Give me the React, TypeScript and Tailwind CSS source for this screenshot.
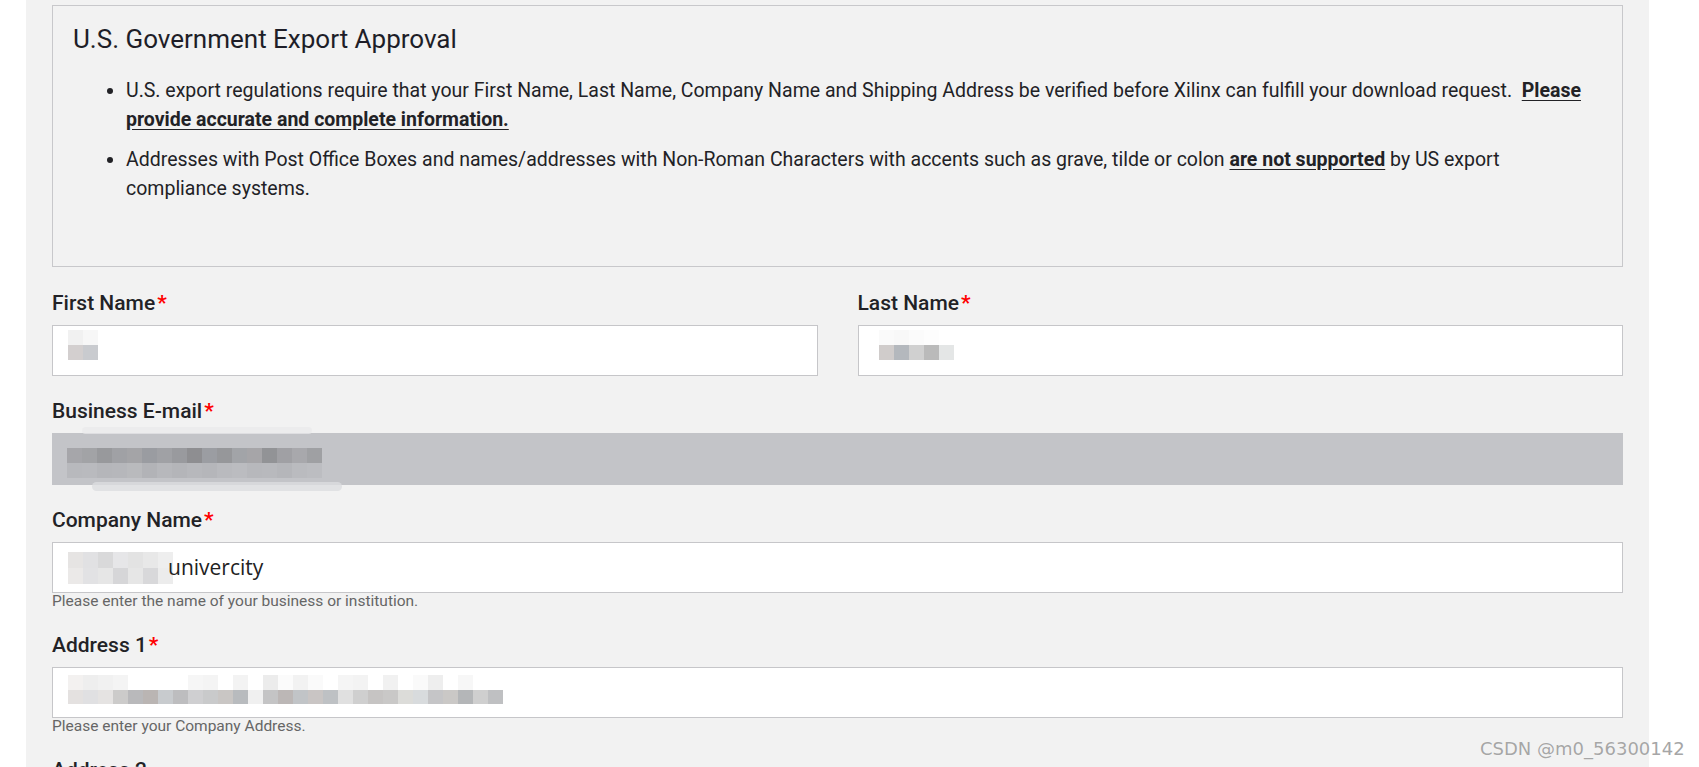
import React from "react";

type Rows = string[][];

function Mosaic({ rows, h = 15 }: { rows: Rows; h?: number }) {
  return (
    <div className="flex flex-col">
      {rows.map((r, i) => (
        <div key={i} className="flex">
          {r.map((c, j) => (
            <div key={j} className="w-[15px] shrink-0" style={{ backgroundColor: c, height: h }} />
          ))}
        </div>
      ))}
    </div>
  );
}

function Label({ children }: { children: React.ReactNode }) {
  return (
    <div className="text-[21px] leading-[24px] font-medium text-[#222226] mb-[10px]">
      {children}
      <span className="text-[#ff0000] font-bold ml-[2px]">*</span>
    </div>
  );
}

const inputBase = "h-[51px] border border-[#c6c6c9] bg-white";

const emailTop = ["#a6a6aa", "#a2a3a6", "#98999c", "#a0a1a5", "#a4a4a7", "#9a9ca1", "#a0a1a5", "#999a9e", "#8e8e91", "#9b9da2", "#96979a", "#a2a4a8", "#a6a5a8", "#929396", "#a0a0a4", "#a8a8ac", "#9fa0a3"];
const emailBot = ["#b8b9bd", "#b9babe", "#b5b6ba", "#b6b7bb", "#b9babd", "#b2b3b7", "#b7b8bc", "#b4b5b9", "#b7b8bc", "#b5b6ba", "#b9babe", "#bbbcc0", "#b7b8bc", "#b8b9bd", "#b5b6ba", "#babbbf", "#bcbdc1"];

const addrTop = ["#f3f1f0", "#eeeeee", "#f1f1f1", "#f4f4f4", "#ffffff", "#ffffff", "#ffffff", "#ffffff", "#f6f6f6", "#f4f4f4", "#ffffff", "#f3f3f3", "#ffffff", "#ececec", "#fbfbfb", "#f2f2f2", "#fafafa", "#ffffff", "#f5f5f5", "#f3f3f3", "#ffffff", "#f1f1f1", "#ffffff", "#fafafa", "#eeeeee", "#ffffff", "#f7f7f7", "#ffffff", "#ffffff"];
const addrBot = ["#e4e1e0", "#e0e0e2", "#e5e3e2", "#cccbca", "#b9b9bb", "#bab5b3", "#c8cbce", "#bdbdbf", "#cfcfd1", "#c9cacb", "#c9c6c4", "#b8bbbe", "#f0f0f0", "#c4c4c5", "#bcb7b6", "#c1c4c7", "#c9c5c4", "#bec1c4", "#e0e0e0", "#cfcfcf", "#c6c4c3", "#c9c8c7", "#dcdcd9", "#d8dbdd", "#c5c5c7", "#cac8c6", "#b4b6b8", "#cfcfcf", "#bfc0c2"];

export default function App() {
  return (
    <div className="relative min-h-screen bg-white font-[Roboto,sans-serif] text-[#222226]">
      <div className="ml-[26px] w-[1623px] min-h-screen bg-[#f2f2f2] px-[26px] pt-[5px] pb-[60px]">
        <div className="border border-[#c8c8cb] px-[20px] pt-[17px] pb-[63px]">
          <h3 className="text-[26px] leading-[32px] font-normal text-[#1e1e28]">U.S. Government Export Approval</h3>
          <ul className="list-disc pl-[53px] pr-[14px] mt-[21px] text-[19.5px] leading-[29px] flex flex-col gap-[11px]">
            <li>
              U.S. export regulations require that your First Name, Last Name, Company Name and Shipping Address be verified before Xilinx can fulfill your download request.&nbsp;{" "}
              <b className="font-bold underline underline-offset-[3px]">Please provide accurate and complete information.</b>
            </li>
            <li>
              Addresses with Post Office Boxes and names/addresses with Non-Roman Characters with accents such as grave, tilde or colon{" "}
              <b className="font-bold underline underline-offset-[3px]">are not supported</b> by US export compliance systems.
            </li>
          </ul>
        </div>

        <div className="mt-[24px] flex flex-col gap-[23px]">
          <div className="grid grid-cols-2 gap-[40px]">
            <div>
              <Label>First Name</Label>
              <div className={`${inputBase} pl-[15px] pt-[4px]`}>
                <Mosaic rows={[["#f1f1f1", "#f7f7f7"], ["#d3cfcf", "#c9cbcf"]]} />
              </div>
            </div>
            <div>
              <Label>Last Name</Label>
              <div className={`${inputBase} pl-[20px] pt-[4px]`}>
                <Mosaic rows={[["#fafafa", "#f8f8f8", "#fbfbfb", "#fdfdfd", "#ffffff"], ["#d0cccb", "#b4b8bd", "#d0d0d0", "#bababa", "#e4e6e6"]]} />
              </div>
            </div>
          </div>

          <div className="relative">
            <Label>Business E-mail</Label>
            <div className="h-[52px] bg-[#c3c4c8] pl-[15px] pt-[15px]">
              <Mosaic rows={[emailTop, emailBot]} />
            </div>
            <div className="absolute left-[30px] top-[28px] w-[230px] h-[7px] rounded-full bg-[#e9e9eb] opacity-70" />
            <div className="absolute left-[40px] top-[83px] w-[250px] h-[9px] rounded-full bg-[#dcdde0] opacity-80" />
          </div>

          <div>
            <Label>Company Name</Label>
            <div className={`${inputBase} pl-[15px] flex items-center`}>
              <Mosaic rows={[["#e6e4e3", "#e1e1e3", "#d9d9da", "#e6e6e8", "#e3e3e3", "#e8e8e8", "#eeeeee"], ["#ebe9e8", "#e2e2e4", "#e6e6e6", "#d6d6d8", "#e6e6e6", "#d8d8da", "#ececec"]]} h={16} />
              <span className="font-['Open_Sans',sans-serif] text-[21px] text-[#222] -ml-[5px]">univercity</span>
            </div>
            <div className="text-[15.5px] leading-[17px] text-[#666]">Please enter the name of your business or institution.</div>
          </div>

          <div>
            <Label>Address 1</Label>
            <div className={`${inputBase} pl-[15px] pt-[7px]`}>
              <Mosaic rows={[addrTop, addrBot]} h={14.5} />
            </div>
            <div className="text-[15.5px] leading-[17px] text-[#666]">Please enter your Company Address.</div>
          </div>

          <div>
            <div className="text-[21px] leading-[24px] font-medium text-[#222226] mb-[10px]">Address 2</div>
            <div className={inputBase} />
          </div>
        </div>
      </div>

      <div className="absolute left-[1480px] top-[739px] whitespace-nowrap font-['DejaVu_Sans',sans-serif] text-[18px] leading-[20px] text-[#a6a6a6] [text-shadow:0_0_1px_#ffffff]">
        CSDN @m0_56300142
      </div>
    </div>
  );
}
